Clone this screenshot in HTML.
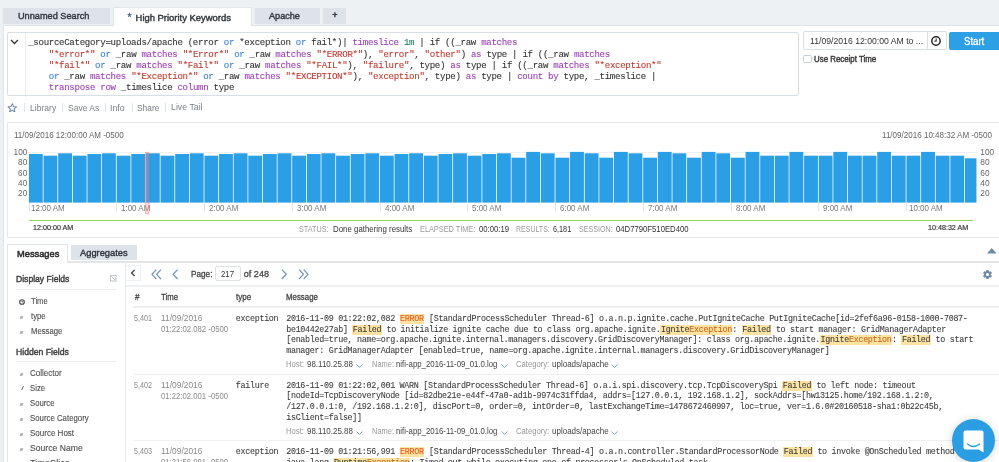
<!DOCTYPE html>
<html><head><meta charset="utf-8">
<style>
*{box-sizing:border-box;margin:0;padding:0}
html,body{width:999px;height:462px;overflow:hidden;background:#eef1f3;font-family:"Liberation Sans",sans-serif;color:#444;position:relative}
.a{position:absolute;white-space:pre}
.s{color:#c0392f}.o{color:#3b7fd9}.k{color:#9a3fb5}.n{color:#23805c}
.bar{position:absolute;background:#2b9be0}
.hl{background:#fce3a2;padding:0 0.5px}
.er{color:#ec5a1e}
.ex{color:#c8661c}
</style></head><body><div id="root" style="position:absolute;left:0;top:0;width:999px;height:462px;overflow:hidden;will-change:transform;background:#eef1f3">
<div class="a" style="left:3px;top:8px;width:107px;height:15.5px;background:#dde3e9;"></div>
<div class="a" style="left:17.60px;top:9.91px;font:normal 9.72px/12.64px 'Liberation Sans',sans-serif;color:#34383c;-webkit-text-stroke:0.42px #34383c;transform:scaleX(0.9439);transform-origin:0 0;">Unnamed Search</div>
<div class="a" style="left:3px;top:25px;width:1000px;height:440px;background:#fff;border:1px solid #e0e5e9"></div>
<div class="a" style="left:112.5px;top:7px;width:139.5px;height:19px;background:#fff;border:1px solid #e0e5e9;border-bottom:none"></div>
<div class="a" style="left:127.60px;top:11.14px;font:normal 10.5px/13.65px 'Liberation Sans',sans-serif;color:#3d6685;-webkit-text-stroke:0.3px #3d6685;">*</div>
<div class="a" style="left:135.60px;top:11.50px;font:normal 9.43px/12.26px 'Liberation Sans',sans-serif;color:#33373b;-webkit-text-stroke:0.42px #33373b;">High Priority Keywords</div>
<div class="a" style="left:255px;top:8px;width:65px;height:16px;background:#dde3e9;"></div>
<div class="a" style="left:268.75px;top:10.14px;font:normal 9.69px/12.6px 'Liberation Sans',sans-serif;color:#34383c;-webkit-text-stroke:0.42px #34383c;transform:scaleX(0.9432);transform-origin:0 0;">Apache</div>
<div class="a" style="left:322.6px;top:8px;width:23.4px;height:16px;background:#dde3e9;"></div>
<div class="a" style="left:332.20px;top:10.33px;font:normal 9px/11.7px 'Liberation Sans',sans-serif;color:#34383c;-webkit-text-stroke:0.5px #34383c;">+</div>
<div class="a" style="left:6.5px;top:31.5px;width:792.5px;height:64.5px;background:#fff;border:1px solid #d8dfe4;border-radius:2px"></div>
<div class="a" style="left:24.5px;top:32.5px;width:1px;height:62.5px;background:#e9edf0;"></div>
<svg class="a" style="left:10px;top:39px" width="9" height="6" viewBox="0 0 9 6"><path d="M1 1 L4.5 4.5 L8 1" fill="none" stroke="#333" stroke-width="1.3"/></svg>
<div class="a" style="left:28.2px;top:37.45px;font:9.1px/11.25px 'Liberation Mono',monospace;letter-spacing:-0.311px;color:#333;-webkit-text-stroke-width:0.1px">_sourceCategory=uploads/apache (error <span class="o">or</span> *exception <span class="o">or</span> fail*)| <span class="k">timeslice</span> <span class="n">1m</span> | if ((_raw <span class="k">matches</span>
    <span class="s">"*error*"</span> <span class="o">or</span> _raw <span class="k">matches</span> <span class="s">"*Error*"</span> <span class="o">or</span> _raw <span class="k">matches</span> <span class="s">"*ERROR*"</span>), <span class="s">"error"</span>, <span class="s">"other"</span>) <span class="k">as</span> type | if ((_raw <span class="k">matches</span>
    <span class="s">"*fail*"</span> <span class="o">or</span> _raw <span class="k">matches</span> <span class="s">"*Fail*"</span> <span class="o">or</span> _raw <span class="k">matches</span> <span class="s">"*FAIL*"</span>), <span class="s">"failure"</span>, type) <span class="k">as</span> type | if ((_raw <span class="k">matches</span> <span class="s">"*exception*"</span>
    <span class="o">or</span> _raw <span class="k">matches</span> <span class="s">"*Exception*"</span> <span class="o">or</span> _raw <span class="k">matches</span> <span class="s">"*EXCEPTION*"</span>), <span class="s">"exception"</span>, type) <span class="k">as</span> type | <span class="k">count by</span> type, _timeslice |
    <span class="k">transpose row</span> _timeslice <span class="k">column</span> type</div>
<div class="a" style="left:803.3px;top:31.4px;width:143.5px;height:18.8px;background:#fff;border:1px solid #d8dfe4;border-radius:2px"></div>
<div class="a" style="left:926.5px;top:32.4px;width:1px;height:16.8px;background:#d8dfe4;"></div>
<div class="a" style="left:809.80px;top:35.73px;font:normal 9.2px/11.96px 'Liberation Sans',sans-serif;color:#333;transform:scaleX(0.9431);transform-origin:0 0;">11/09/2016 12:00:00 AM to ...</div>
<svg class="a" style="left:929.7px;top:34.7px" width="12" height="12" viewBox="0 0 12 12"><circle cx="6" cy="6" r="4.2" fill="none" stroke="#2a2a2a" stroke-width="1.5"/><path d="M6.2 3.4 L6.2 6.1 L4.4 6.1" fill="none" stroke="#3a3a3a" stroke-width="1.1"/></svg>
<div class="a" style="left:949.3px;top:31.8px;width:60px;height:18.4px;background:#2c9fe5;border-radius:2px"></div>
<div class="a" style="left:964.00px;top:34.94px;font:normal 10.19px/13.25px 'Liberation Sans',sans-serif;color:#fff;-webkit-text-stroke:0.3px #fff;transform:scaleX(0.9433);transform-origin:0 0;">Start</div>
<div class="a" style="left:803.3px;top:54.5px;width:8.5px;height:8.5px;background:#fff;border:1px solid #c9d0d6;border-radius:1.5px"></div>
<div class="a" style="left:813.70px;top:53.96px;font:normal 8.37px/10.88px 'Liberation Sans',sans-serif;color:#383838;-webkit-text-stroke:0.4px #383838;transform:scaleX(0.9432);transform-origin:0 0;">Use Receipt Time</div>
<svg class="a" style="left:7.2px;top:102.6px" width="10.5" height="9.6" viewBox="0 0 24 22"><path d="M12 1.5 L14.9 8 L21.8 8.7 L16.6 13.4 L18.1 20.3 L12 16.7 L5.9 20.3 L7.4 13.4 L2.2 8.7 L9.1 8 Z" fill="none" stroke="#6f8cab" stroke-width="2.4" stroke-linejoin="round"/></svg>
<div class="a" style="left:24px;top:103px;width:1px;height:9px;background:#dfe4e8;"></div>
<div class="a" style="left:62.4px;top:103px;width:1px;height:9px;background:#dfe4e8;"></div>
<div class="a" style="left:105px;top:103px;width:1px;height:9px;background:#dfe4e8;"></div>
<div class="a" style="left:131.7px;top:103px;width:1px;height:9px;background:#dfe4e8;"></div>
<div class="a" style="left:165.4px;top:103px;width:1px;height:9px;background:#dfe4e8;"></div>
<div class="a" style="left:29.80px;top:102.72px;font:normal 8.91px/11.58px 'Liberation Sans',sans-serif;color:#7b8086;transform:scaleX(0.9620);transform-origin:0 0;">Library</div>
<div class="a" style="left:67.60px;top:102.79px;font:normal 8.84px/11.49px 'Liberation Sans',sans-serif;color:#7b8086;transform:scaleX(0.9619);transform-origin:0 0;">Save As</div>
<div class="a" style="left:110.40px;top:102.53px;font:normal 9.1px/11.83px 'Liberation Sans',sans-serif;color:#7b8086;transform:scaleX(0.9619);transform-origin:0 0;">Info</div>
<div class="a" style="left:137.00px;top:102.90px;font:normal 8.73px/11.35px 'Liberation Sans',sans-serif;color:#7b8086;transform:scaleX(0.9615);transform-origin:0 0;">Share</div>
<div class="a" style="left:170.60px;top:102.49px;font:normal 9.14px/11.88px 'Liberation Sans',sans-serif;color:#7b8086;transform:scaleX(0.9617);transform-origin:0 0;">Live Tail</div>
<div class="a" style="left:6.5px;top:121.8px;width:1000px;height:116.6px;background:#fff;border:1px solid #e5e9ec"></div>
<div class="a" style="left:14.30px;top:129.78px;font:normal 8.45px/10.98px 'Liberation Sans',sans-serif;color:#666;transform:scaleX(0.9521);transform-origin:0 0;">11/09/2016 12:00:00 AM -0500</div>
<div class="a" style="left:882.00px;top:129.77px;font:normal 8.46px/11.0px 'Liberation Sans',sans-serif;color:#666;transform:scaleX(0.9519);transform-origin:0 0;">11/09/2016 10:48:32 AM -0500</div>
<div class="a" style="left:28px;top:151.5px;width:950px;height:1px;background:#eef0f2;"></div>
<svg class="a" style="left:0;top:0" width="999" height="240" viewBox="0 0 999 240"><rect x="28.90" y="154.00" width="13.85" height="48.60" fill="#2a9fe6"/><rect x="43.53" y="155.70" width="13.85" height="46.90" fill="#2a9fe6"/><rect x="58.15" y="153.30" width="13.85" height="49.30" fill="#2a9fe6"/><rect x="72.78" y="155.70" width="13.85" height="46.90" fill="#2a9fe6"/><rect x="87.40" y="154.00" width="13.85" height="48.60" fill="#2a9fe6"/><rect x="102.03" y="153.30" width="13.85" height="49.30" fill="#2a9fe6"/><rect x="116.66" y="155.70" width="13.85" height="46.90" fill="#2a9fe6"/><rect x="131.28" y="154.00" width="13.85" height="48.60" fill="#2a9fe6"/><rect x="145.91" y="153.30" width="13.85" height="49.30" fill="#2a9fe6"/><rect x="160.53" y="155.70" width="13.85" height="46.90" fill="#2a9fe6"/><rect x="175.16" y="154.00" width="13.85" height="48.60" fill="#2a9fe6"/><rect x="189.79" y="153.30" width="13.85" height="49.30" fill="#2a9fe6"/><rect x="204.41" y="155.70" width="13.85" height="46.90" fill="#2a9fe6"/><rect x="219.04" y="154.00" width="13.85" height="48.60" fill="#2a9fe6"/><rect x="233.66" y="153.30" width="13.85" height="49.30" fill="#2a9fe6"/><rect x="248.29" y="155.70" width="13.85" height="46.90" fill="#2a9fe6"/><rect x="262.92" y="154.00" width="13.85" height="48.60" fill="#2a9fe6"/><rect x="277.54" y="153.30" width="13.85" height="49.30" fill="#2a9fe6"/><rect x="292.17" y="155.70" width="13.85" height="46.90" fill="#2a9fe6"/><rect x="306.79" y="154.00" width="13.85" height="48.60" fill="#2a9fe6"/><rect x="321.42" y="153.30" width="13.85" height="49.30" fill="#2a9fe6"/><rect x="336.05" y="155.70" width="13.85" height="46.90" fill="#2a9fe6"/><rect x="350.67" y="154.00" width="13.85" height="48.60" fill="#2a9fe6"/><rect x="365.30" y="153.30" width="13.85" height="49.30" fill="#2a9fe6"/><rect x="379.92" y="155.70" width="13.85" height="46.90" fill="#2a9fe6"/><rect x="394.55" y="154.00" width="13.85" height="48.60" fill="#2a9fe6"/><rect x="409.18" y="153.30" width="13.85" height="49.30" fill="#2a9fe6"/><rect x="423.80" y="155.70" width="13.85" height="46.90" fill="#2a9fe6"/><rect x="438.43" y="154.00" width="13.85" height="48.60" fill="#2a9fe6"/><rect x="453.05" y="153.30" width="13.85" height="49.30" fill="#2a9fe6"/><rect x="467.68" y="155.70" width="13.85" height="46.90" fill="#2a9fe6"/><rect x="482.31" y="154.00" width="13.85" height="48.60" fill="#2a9fe6"/><rect x="496.93" y="153.30" width="13.85" height="49.30" fill="#2a9fe6"/><rect x="511.56" y="157.70" width="13.85" height="44.90" fill="#2a9fe6"/><rect x="526.18" y="151.90" width="13.85" height="50.70" fill="#2a9fe6"/><rect x="540.81" y="153.30" width="13.85" height="49.30" fill="#2a9fe6"/><rect x="555.44" y="157.70" width="13.85" height="44.90" fill="#2a9fe6"/><rect x="570.06" y="151.90" width="13.85" height="50.70" fill="#2a9fe6"/><rect x="584.69" y="153.30" width="13.85" height="49.30" fill="#2a9fe6"/><rect x="599.31" y="157.70" width="13.85" height="44.90" fill="#2a9fe6"/><rect x="613.94" y="151.90" width="13.85" height="50.70" fill="#2a9fe6"/><rect x="628.57" y="153.30" width="13.85" height="49.30" fill="#2a9fe6"/><rect x="643.19" y="157.70" width="13.85" height="44.90" fill="#2a9fe6"/><rect x="657.82" y="151.90" width="13.85" height="50.70" fill="#2a9fe6"/><rect x="672.44" y="153.30" width="13.85" height="49.30" fill="#2a9fe6"/><rect x="687.07" y="157.70" width="13.85" height="44.90" fill="#2a9fe6"/><rect x="701.70" y="151.90" width="13.85" height="50.70" fill="#2a9fe6"/><rect x="716.32" y="153.30" width="13.85" height="49.30" fill="#2a9fe6"/><rect x="730.95" y="157.70" width="13.85" height="44.90" fill="#2a9fe6"/><rect x="745.57" y="151.90" width="13.85" height="50.70" fill="#2a9fe6"/><rect x="760.20" y="155.70" width="13.85" height="46.90" fill="#2a9fe6"/><rect x="774.83" y="155.70" width="13.85" height="46.90" fill="#2a9fe6"/><rect x="789.45" y="151.90" width="13.85" height="50.70" fill="#2a9fe6"/><rect x="804.08" y="155.70" width="13.85" height="46.90" fill="#2a9fe6"/><rect x="818.70" y="155.70" width="13.85" height="46.90" fill="#2a9fe6"/><rect x="833.33" y="151.90" width="13.85" height="50.70" fill="#2a9fe6"/><rect x="847.96" y="155.70" width="13.85" height="46.90" fill="#2a9fe6"/><rect x="862.58" y="155.70" width="13.85" height="46.90" fill="#2a9fe6"/><rect x="877.21" y="151.90" width="13.85" height="50.70" fill="#2a9fe6"/><rect x="891.83" y="155.70" width="13.85" height="46.90" fill="#2a9fe6"/><rect x="906.46" y="155.70" width="13.85" height="46.90" fill="#2a9fe6"/><rect x="921.09" y="151.90" width="13.85" height="50.70" fill="#2a9fe6"/><rect x="935.71" y="155.70" width="13.85" height="46.90" fill="#2a9fe6"/><rect x="950.34" y="155.70" width="13.85" height="46.90" fill="#2a9fe6"/><rect x="964.96" y="158.30" width="11.50" height="44.30" fill="#2a9fe6"/></svg>
<div class="a" style="left:13.60px;top:147.03px;font:normal 8.3px/10.79px 'Liberation Sans',sans-serif;color:#666;">100</div>
<div class="a" style="left:980.30px;top:147.03px;font:normal 8.3px/10.79px 'Liberation Sans',sans-serif;color:#666;">100</div>
<div class="a" style="left:18.10px;top:157.33px;font:normal 8.3px/10.79px 'Liberation Sans',sans-serif;color:#666;">80</div>
<div class="a" style="left:980.30px;top:157.33px;font:normal 8.3px/10.79px 'Liberation Sans',sans-serif;color:#666;">80</div>
<div class="a" style="left:18.10px;top:167.63px;font:normal 8.3px/10.79px 'Liberation Sans',sans-serif;color:#666;">60</div>
<div class="a" style="left:980.30px;top:167.63px;font:normal 8.3px/10.79px 'Liberation Sans',sans-serif;color:#666;">60</div>
<div class="a" style="left:18.10px;top:177.93px;font:normal 8.3px/10.79px 'Liberation Sans',sans-serif;color:#666;">40</div>
<div class="a" style="left:980.30px;top:177.93px;font:normal 8.3px/10.79px 'Liberation Sans',sans-serif;color:#666;">40</div>
<div class="a" style="left:18.10px;top:188.23px;font:normal 8.3px/10.79px 'Liberation Sans',sans-serif;color:#666;">20</div>
<div class="a" style="left:980.30px;top:188.23px;font:normal 8.3px/10.79px 'Liberation Sans',sans-serif;color:#666;">20</div>
<div class="a" style="left:28.6px;top:202.5px;width:1px;height:8px;background:#e3e6e9;"></div>
<div class="a" style="left:31.40px;top:203.63px;font:normal 8.2px/10.66px 'Liberation Sans',sans-serif;color:#777;transform:scaleX(0.9756);transform-origin:0 0;">12:00 AM</div>
<div class="a" style="left:116.4px;top:202.5px;width:1px;height:8px;background:#e3e6e9;"></div>
<div class="a" style="left:121.38px;top:203.63px;font:normal 8.2px/10.66px 'Liberation Sans',sans-serif;color:#777;transform:scaleX(0.9756);transform-origin:0 0;">1:00 AM</div>
<div class="a" style="left:204.1px;top:202.5px;width:1px;height:8px;background:#e3e6e9;"></div>
<div class="a" style="left:209.14px;top:203.63px;font:normal 8.2px/10.66px 'Liberation Sans',sans-serif;color:#777;transform:scaleX(0.9756);transform-origin:0 0;">2:00 AM</div>
<div class="a" style="left:291.9px;top:202.5px;width:1px;height:8px;background:#e3e6e9;"></div>
<div class="a" style="left:296.90px;top:203.63px;font:normal 8.2px/10.66px 'Liberation Sans',sans-serif;color:#777;transform:scaleX(0.9756);transform-origin:0 0;">3:00 AM</div>
<div class="a" style="left:379.6px;top:202.5px;width:1px;height:8px;background:#e3e6e9;"></div>
<div class="a" style="left:384.66px;top:203.63px;font:normal 8.2px/10.66px 'Liberation Sans',sans-serif;color:#777;transform:scaleX(0.9756);transform-origin:0 0;">4:00 AM</div>
<div class="a" style="left:467.4px;top:202.5px;width:1px;height:8px;background:#e3e6e9;"></div>
<div class="a" style="left:472.42px;top:203.63px;font:normal 8.2px/10.66px 'Liberation Sans',sans-serif;color:#777;transform:scaleX(0.9756);transform-origin:0 0;">5:00 AM</div>
<div class="a" style="left:555.2px;top:202.5px;width:1px;height:8px;background:#e3e6e9;"></div>
<div class="a" style="left:560.18px;top:203.63px;font:normal 8.2px/10.66px 'Liberation Sans',sans-serif;color:#777;transform:scaleX(0.9756);transform-origin:0 0;">6:00 AM</div>
<div class="a" style="left:642.9px;top:202.5px;width:1px;height:8px;background:#e3e6e9;"></div>
<div class="a" style="left:647.94px;top:203.63px;font:normal 8.2px/10.66px 'Liberation Sans',sans-serif;color:#777;transform:scaleX(0.9756);transform-origin:0 0;">7:00 AM</div>
<div class="a" style="left:730.7px;top:202.5px;width:1px;height:8px;background:#e3e6e9;"></div>
<div class="a" style="left:735.70px;top:203.63px;font:normal 8.2px/10.66px 'Liberation Sans',sans-serif;color:#777;transform:scaleX(0.9756);transform-origin:0 0;">8:00 AM</div>
<div class="a" style="left:818.4px;top:202.5px;width:1px;height:8px;background:#e3e6e9;"></div>
<div class="a" style="left:823.46px;top:203.63px;font:normal 8.2px/10.66px 'Liberation Sans',sans-serif;color:#777;transform:scaleX(0.9756);transform-origin:0 0;">9:00 AM</div>
<div class="a" style="left:906.2px;top:202.5px;width:1px;height:8px;background:#e3e6e9;"></div>
<div class="a" style="left:909.00px;top:203.63px;font:normal 8.2px/10.66px 'Liberation Sans',sans-serif;color:#777;transform:scaleX(0.9756);transform-origin:0 0;">10:00 AM</div>
<div class="a" style="left:28.6px;top:219.6px;width:944px;height:1.6px;background:#8fd05a;"></div>
<svg class="a" style="left:0;top:0" width="240" height="240" viewBox="0 0 240 240"><rect x="145.5" y="152.3" width="3.4" height="61.5" fill="rgba(255,140,140,0.32)" stroke="rgba(240,110,110,0.5)" stroke-width="0.8"/></svg>
<div class="a" style="left:32.50px;top:222.89px;font:normal 7.54px/9.8px 'Liberation Sans',sans-serif;color:#333;-webkit-text-stroke:0.18px #333;transform:scaleX(0.9518);transform-origin:0 0;">12:00:00 AM</div>
<div class="a" style="left:927.80px;top:222.90px;font:normal 7.52px/9.78px 'Liberation Sans',sans-serif;color:#333;-webkit-text-stroke:0.18px #333;transform:scaleX(0.9520);transform-origin:0 0;">10:48:32 AM</div>
<div class="a" style="left:298.90px;top:223.73px;font:normal 8.6px/11.18px 'Liberation Sans',sans-serif;color:#9a9a9a;transform:scaleX(0.8419);transform-origin:0 0;">STATUS:</div>
<div class="a" style="left:333.20px;top:223.73px;font:normal 8.6px/11.18px 'Liberation Sans',sans-serif;color:#333;transform:scaleX(0.9164);transform-origin:0 0;">Done gathering results</div>
<div class="a" style="left:419.70px;top:223.73px;font:normal 8.6px/11.18px 'Liberation Sans',sans-serif;color:#9a9a9a;transform:scaleX(0.8528);transform-origin:0 0;">ELAPSED TIME:</div>
<div class="a" style="left:479.00px;top:223.73px;font:normal 8.6px/11.18px 'Liberation Sans',sans-serif;color:#333;transform:scaleX(0.8961);transform-origin:0 0;">00:00:19</div>
<div class="a" style="left:515.60px;top:223.73px;font:normal 8.6px/11.18px 'Liberation Sans',sans-serif;color:#9a9a9a;transform:scaleX(0.8161);transform-origin:0 0;">RESULTS:</div>
<div class="a" style="left:553.30px;top:223.73px;font:normal 8.6px/11.18px 'Liberation Sans',sans-serif;color:#333;transform:scaleX(0.8457);transform-origin:0 0;">6,181</div>
<div class="a" style="left:578.70px;top:223.73px;font:normal 8.6px/11.18px 'Liberation Sans',sans-serif;color:#9a9a9a;transform:scaleX(0.8320);transform-origin:0 0;">SESSION:</div>
<div class="a" style="left:616.40px;top:223.73px;font:normal 8.6px/11.18px 'Liberation Sans',sans-serif;color:#333;transform:scaleX(0.8984);transform-origin:0 0;">04D7790F510ED400</div>
<div class="a" style="left:7px;top:260.5px;width:1000px;height:210px;background:#fff;border:1px solid #e0e5e9;border-top:2px solid #e4e5e7"></div>
<div class="a" style="left:7px;top:243.6px;width:61px;height:19.4px;background:#fff;border:1px solid #e0e5e9;border-bottom:none"></div>
<div class="a" style="left:16.50px;top:248.26px;font:normal 9.67px/12.57px 'Liberation Sans',sans-serif;color:#2a2a2a;-webkit-text-stroke:0.5px #2a2a2a;transform:scaleX(0.9620);transform-origin:0 0;">Messages</div>
<div class="a" style="left:70.6px;top:244.6px;width:66px;height:15px;background:#dde3e9;"></div>
<div class="a" style="left:79.70px;top:246.96px;font:normal 9.77px/12.7px 'Liberation Sans',sans-serif;color:#33373b;-webkit-text-stroke:0.42px #33373b;transform:scaleX(0.9525);transform-origin:0 0;">Aggregates</div>
<svg class="a" style="left:986.5px;top:248.2px" width="9.5" height="5.5" viewBox="0 0 9 5"><path d="M0 5 L4.5 0 L9 5Z" fill="#6f8aa5"/></svg>
<div class="a" style="left:125.4px;top:261px;width:1px;height:210px;background:#e6eaed;"></div>
<div class="a" style="left:15.90px;top:273.90px;font:normal 9.03px/11.74px 'Liberation Sans',sans-serif;color:#3d3d3d;-webkit-text-stroke:0.42px #3d3d3d;transform:scaleX(0.9519);transform-origin:0 0;">Display Fields</div>
<svg class="a" style="left:110px;top:275px" width="6.5" height="6.5" viewBox="0 0 7 7"><rect x="0.5" y="0.5" width="6" height="6" fill="none" stroke="#b9c0c6"/><path d="M1.5 1.5 L5.5 5.5" stroke="#b9c0c6"/></svg>
<div class="a" style="left:15.9px;top:288.7px;width:100.5px;height:1px;background:#eceff1;"></div>
<svg class="a" style="left:19.2px;top:299px" width="6" height="6" viewBox="0 0 6 6"><circle cx="3" cy="3" r="2.3" fill="none" stroke="#444" stroke-width="1.1"/><path d="M3 1.8V3H4" stroke="#444" stroke-width=".8" fill="none"/></svg>
<div class="a" style="left:30.60px;top:295.63px;font:normal 8.4px/10.92px 'Liberation Sans',sans-serif;color:#4d4d4d;-webkit-text-stroke:0.1px #4d4d4d;transform:scaleX(0.9153);transform-origin:0 0;">Time</div>
<div class="a" style="left:20.4px;top:315.79999999999995px;width:3px;height:3px;background:#b3b3b3;transform:skewX(-15deg);border-radius:1px"></div>
<div class="a" style="left:30.60px;top:311.03px;font:normal 8.4px/10.92px 'Liberation Sans',sans-serif;color:#4d4d4d;-webkit-text-stroke:0.1px #4d4d4d;transform:scaleX(0.9196);transform-origin:0 0;">type</div>
<div class="a" style="left:20.4px;top:330.59999999999997px;width:3px;height:3px;background:#b3b3b3;transform:skewX(-15deg);border-radius:1px"></div>
<div class="a" style="left:30.60px;top:325.83px;font:normal 8.4px/10.92px 'Liberation Sans',sans-serif;color:#4d4d4d;-webkit-text-stroke:0.1px #4d4d4d;transform:scaleX(0.9242);transform-origin:0 0;">Message</div>
<div class="a" style="left:16.10px;top:346.55px;font:normal 9.08px/11.8px 'Liberation Sans',sans-serif;color:#3d3d3d;-webkit-text-stroke:0.42px #3d3d3d;transform:scaleX(0.9528);transform-origin:0 0;">Hidden Fields</div>
<div class="a" style="left:15.9px;top:361.1px;width:100.5px;height:1px;background:#eceff1;"></div>
<div class="a" style="left:20.4px;top:372.59999999999997px;width:3px;height:3px;background:#b3b3b3;transform:skewX(-15deg);border-radius:1px"></div>
<div class="a" style="left:30.30px;top:367.83px;font:normal 8.4px/10.92px 'Liberation Sans',sans-serif;color:#4d4d4d;-webkit-text-stroke:0.1px #4d4d4d;transform:scaleX(0.9564);transform-origin:0 0;">Collector</div>
<div class="a" style="left:21.6px;top:386.28px;width:1.3px;height:4.2px;background:#666;transform:skewX(-22deg)"></div>
<div class="a" style="left:30.30px;top:382.91px;font:normal 8.4px/10.92px 'Liberation Sans',sans-serif;color:#4d4d4d;-webkit-text-stroke:0.1px #4d4d4d;transform:scaleX(0.9240);transform-origin:0 0;">Size</div>
<div class="a" style="left:20.4px;top:402.76px;width:3px;height:3px;background:#b3b3b3;transform:skewX(-15deg);border-radius:1px"></div>
<div class="a" style="left:30.30px;top:397.99px;font:normal 8.4px/10.92px 'Liberation Sans',sans-serif;color:#4d4d4d;-webkit-text-stroke:0.1px #4d4d4d;transform:scaleX(0.9242);transform-origin:0 0;">Source</div>
<div class="a" style="left:20.4px;top:417.84px;width:3px;height:3px;background:#b3b3b3;transform:skewX(-15deg);border-radius:1px"></div>
<div class="a" style="left:30.30px;top:413.07px;font:normal 8.4px/10.92px 'Liberation Sans',sans-serif;color:#4d4d4d;-webkit-text-stroke:0.1px #4d4d4d;transform:scaleX(0.9344);transform-origin:0 0;">Source Category</div>
<div class="a" style="left:20.4px;top:432.91999999999996px;width:3px;height:3px;background:#b3b3b3;transform:skewX(-15deg);border-radius:1px"></div>
<div class="a" style="left:30.30px;top:428.15px;font:normal 8.4px/10.92px 'Liberation Sans',sans-serif;color:#4d4d4d;-webkit-text-stroke:0.1px #4d4d4d;transform:scaleX(0.9563);transform-origin:0 0;">Source Host</div>
<div class="a" style="left:20.4px;top:448.0px;width:3px;height:3px;background:#b3b3b3;transform:skewX(-15deg);border-radius:1px"></div>
<div class="a" style="left:30.30px;top:443.23px;font:normal 8.4px/10.92px 'Liberation Sans',sans-serif;color:#4d4d4d;-webkit-text-stroke:0.1px #4d4d4d;transform:scaleX(1.0300);transform-origin:0 0;">Source Name</div>
<div class="a" style="left:20.4px;top:463.08px;width:3px;height:3px;background:#b3b3b3;transform:skewX(-15deg);border-radius:1px"></div>
<div class="a" style="left:30.30px;top:458.31px;font:normal 8.4px/10.92px 'Liberation Sans',sans-serif;color:#4d4d4d;-webkit-text-stroke:0.1px #4d4d4d;transform:scaleX(1.0940);transform-origin:0 0;">TimeSlice</div>
<div class="a" style="left:125.4px;top:264.8px;width:15.5px;height:16px;background:#fff;border:1px solid #eef1f4;border-left:none"></div>
<div class="a" style="left:125.4px;top:261px;width:1px;height:210px;background:#e9ecef;"></div>
<svg class="a" style="left:130px;top:269px" width="6" height="8" viewBox="0 0 6 8"><path d="M4.6 0.9 L1.6 4 L4.6 7.1" fill="none" stroke="#4f5256" stroke-width="1.5"/></svg>
<svg class="a" style="left:150.5px;top:268.8px" width="11" height="11" viewBox="0 0 11 11"><path d="M5.3 0.6 L1 5.3 L5.3 10 M9.9 0.6 L5.6 5.3 L9.9 10" fill="none" stroke="#7595b6" stroke-width="1.25"/></svg>
<svg class="a" style="left:172px;top:268.8px" width="6.5" height="11" viewBox="0 0 6.5 11"><path d="M5.6 0.6 L1.2 5.3 L5.6 10" fill="none" stroke="#7595b6" stroke-width="1.25"/></svg>
<div class="a" style="left:190.50px;top:269.39px;font:normal 8.64px/11.23px 'Liberation Sans',sans-serif;color:#444;-webkit-text-stroke:0.28px #444;transform:scaleX(0.9522);transform-origin:0 0;">Page:</div>
<div class="a" style="left:214.6px;top:265.6px;width:26.6px;height:15.7px;background:#fff;border:1px solid #dde3e8;border-radius:2px"></div>
<div class="a" style="left:221.30px;top:268.83px;font:normal 9.2px/11.96px 'Liberation Sans',sans-serif;color:#333;transform:scaleX(0.8534);transform-origin:0 0;">217</div>
<div class="a" style="left:243.80px;top:268.97px;font:normal 9.06px/11.78px 'Liberation Sans',sans-serif;color:#444;-webkit-text-stroke:0.28px #444;">of 248</div>
<svg class="a" style="left:281.2px;top:268.8px" width="6.5" height="11" viewBox="0 0 6.5 11"><path d="M0.9 0.6 L5.3 5.3 L0.9 10" fill="none" stroke="#7595b6" stroke-width="1.25"/></svg>
<svg class="a" style="left:298.2px;top:268.8px" width="11" height="11" viewBox="0 0 11 11"><path d="M1.1 0.6 L5.4 5.3 L1.1 10 M5.7 0.6 L10 5.3 L5.7 10" fill="none" stroke="#7595b6" stroke-width="1.25"/></svg>
<svg class="a" style="left:982px;top:268.5px" width="11" height="11" viewBox="0 0 24 24"><path fill="#6f8aa5" d="M19.4 13c.04-.3.06-.65.06-1s-.02-.7-.07-1l2.1-1.65c.2-.15.25-.42.13-.64l-2-3.46c-.12-.22-.4-.3-.6-.22l-2.5 1c-.52-.4-1.08-.73-1.7-.98l-.37-2.65A.5.5 0 0 0 14 2h-4c-.25 0-.46.18-.5.42l-.37 2.650c-.62.25-1.18.6-1.7.98l-2.5-1c-.22-.08-.48 0-.6.22l-2 3.46c-.13.22-.07.5.12.64L4.57 11c-.04.3-.07.66-.07 1s.02.7.07 1l-2.100 1.65c-.2.15-.25.42-.13.64l2 3.46c.12.22.4.3.6.22l2.5-1c.52.4 1.08.73 1.7.98l.37 2.65c.04.24.25.42.5.42h4c.25 0 .46-.18.5-.42l.37-2.65c.62-.25 1.18-.6 1.7-.98l2.5 1c.22.08.48 0 .6-.22l2-3.46c.12-.22.07-.5-.12-.64L19.4 13zM12 15.5A3.5 3.5 0 1 1 12 8.5a3.5 3.5 0 0 1 0 7z"/></svg>
<div class="a" style="left:126px;top:285px;width:880px;height:1.6px;background:#eef0f1;"></div>
<div class="a" style="left:134.60px;top:291.73px;font:normal 8.3px/10.79px 'Liberation Sans',sans-serif;color:#444;-webkit-text-stroke:0.28px #444;transform:scaleX(0.9748);transform-origin:0 0;">#</div>
<div class="a" style="left:161.10px;top:291.73px;font:normal 8.3px/10.79px 'Liberation Sans',sans-serif;color:#444;-webkit-text-stroke:0.28px #444;transform:scaleX(0.9373);transform-origin:0 0;">Time</div>
<div class="a" style="left:236.00px;top:291.73px;font:normal 8.3px/10.79px 'Liberation Sans',sans-serif;color:#444;-webkit-text-stroke:0.28px #444;transform:scaleX(0.9689);transform-origin:0 0;">type</div>
<div class="a" style="left:286.10px;top:291.73px;font:normal 8.3px/10.79px 'Liberation Sans',sans-serif;color:#444;-webkit-text-stroke:0.28px #444;transform:scaleX(0.9472);transform-origin:0 0;">Message</div>
<div class="a" style="left:133px;top:306.3px;width:870px;height:1.3px;background:#eef0f2;"></div>
<div class="a" style="left:134.40px;top:314.13px;font:normal 8.2px/10.66px 'Liberation Sans',sans-serif;color:#8a8a8a;transform:scaleX(0.8772);transform-origin:0 0;">5,401</div>
<div class="a" style="left:161.00px;top:314.13px;font:normal 8.2px/10.66px 'Liberation Sans',sans-serif;color:#8a8a8a;transform:scaleX(1.0264);transform-origin:0 0;">11/09/2016</div>
<div class="a" style="left:161.00px;top:324.93px;font:normal 8.2px/10.66px 'Liberation Sans',sans-serif;color:#8a8a8a;transform:scaleX(0.9447);transform-origin:0 0;">01:22:02.082 -0500</div>
<div class="a" style="left:235.80px;top:313.80px;font:normal 8.4px/10.92px 'Liberation Mono',monospace;color:#3c3c3c;-webkit-text-stroke:0.08px #3c3c3c;letter-spacing:-0.301px">exception</div>
<div class="a" style="left:286.2px;top:313.91px;font:8.4px/10.7px 'Liberation Mono',monospace;letter-spacing:-0.301px;color:#3c3c3c;-webkit-text-stroke-width:0.08px">2016-11-09 01:22:02,082 <span class="hl er">ERROR</span> [StandardProcessScheduler Thread-6] o.a.n.p.ignite.cache.PutIgniteCache PutIgniteCache[id=2fef6a96-0158-1000-7087-
be10442e27ab] <span class="hl">Failed</span> to initialize ignite cache due to class org.apache.ignite.<span class="hl">Ignite<span class="ex">Exception</span></span>: <span class="hl">Failed</span> to start manager: GridManagerAdapter
[enabled=true, name=org.apache.ignite.internal.managers.discovery.GridDiscoveryManager]: class org.apache.ignite.<span class="hl">Ignite<span class="ex">Exception</span></span>: <span class="hl">Failed</span> to start
manager: GridManagerAdapter [enabled=true, name=org.apache.ignite.internal.managers.discovery.GridDiscoveryManager]</div>
<div class="a" style="left:286.30px;top:360.13px;font:normal 8.2px/10.66px 'Liberation Sans',sans-serif;color:#999;transform:scaleX(0.9405);transform-origin:0 0;">Host:</div>
<div class="a" style="left:307.00px;top:360.13px;font:normal 8.2px/10.66px 'Liberation Sans',sans-serif;color:#444;transform:scaleX(0.9731);transform-origin:0 0;">98.110.25.88</div>
<svg class="a" style="left:355.7px;top:363.8px" width="7" height="4" viewBox="0 0 7 4"><path d="M0.5 0.5 L3.5 3.3 L6.5 0.5" fill="none" stroke="#6f95c0" stroke-width="0.9"/></svg>
<div class="a" style="left:371.90px;top:360.13px;font:normal 8.2px/10.66px 'Liberation Sans',sans-serif;color:#999;transform:scaleX(0.9150);transform-origin:0 0;">Name:</div>
<div class="a" style="left:396.20px;top:360.13px;font:normal 8.2px/10.66px 'Liberation Sans',sans-serif;color:#444;transform:scaleX(0.9537);transform-origin:0 0;">nifi-app_2016-11-09_01.0.log</div>
<svg class="a" style="left:501px;top:363.8px" width="7" height="4" viewBox="0 0 7 4"><path d="M0.5 0.5 L3.5 3.3 L6.5 0.5" fill="none" stroke="#6f95c0" stroke-width="0.9"/></svg>
<div class="a" style="left:516.30px;top:360.13px;font:normal 8.2px/10.66px 'Liberation Sans',sans-serif;color:#999;transform:scaleX(0.9367);transform-origin:0 0;">Category:</div>
<div class="a" style="left:552.20px;top:360.13px;font:normal 8.2px/10.66px 'Liberation Sans',sans-serif;color:#444;transform:scaleX(0.9792);transform-origin:0 0;">uploads/apache</div>
<svg class="a" style="left:611px;top:363.8px" width="7" height="4" viewBox="0 0 7 4"><path d="M0.5 0.5 L3.5 3.3 L6.5 0.5" fill="none" stroke="#6f95c0" stroke-width="0.9"/></svg>
<div class="a" style="left:133px;top:374.2px;width:870px;height:1.3px;background:#eef0f2;"></div>
<div class="a" style="left:134.40px;top:380.83px;font:normal 8.2px/10.66px 'Liberation Sans',sans-serif;color:#8a8a8a;transform:scaleX(0.8772);transform-origin:0 0;">5,402</div>
<div class="a" style="left:161.00px;top:380.83px;font:normal 8.2px/10.66px 'Liberation Sans',sans-serif;color:#8a8a8a;transform:scaleX(1.0264);transform-origin:0 0;">11/09/2016</div>
<div class="a" style="left:161.00px;top:391.63px;font:normal 8.2px/10.66px 'Liberation Sans',sans-serif;color:#8a8a8a;transform:scaleX(0.9447);transform-origin:0 0;">01:22:02.001 -0500</div>
<div class="a" style="left:235.80px;top:380.50px;font:normal 8.4px/10.92px 'Liberation Mono',monospace;color:#3c3c3c;-webkit-text-stroke:0.08px #3c3c3c;letter-spacing:-0.301px">failure</div>
<div class="a" style="left:286.2px;top:380.61px;font:8.4px/10.7px 'Liberation Mono',monospace;letter-spacing:-0.301px;color:#3c3c3c;-webkit-text-stroke-width:0.08px">2016-11-09 01:22:02,001 WARN [StandardProcessScheduler Thread-6] o.a.i.spi.discovery.tcp.TcpDiscoverySpi <span class="hl">Failed</span> to left node: timeout
[nodeId=TcpDiscoveryNode [id=82dbe21e-e44f-47a0-ad1b-9974c31ffda4, addrs=[127.0.0.1, 192.168.1.2], sockAddrs=[hw13125.home/192.168.1.2:0,
/127.0.0.1:0, /192.168.1.2:0], discPort=0, order=0, intOrder=0, lastExchangeTime=1478672460997, loc=true, ver=1.6.0#20160518-sha1:0b22c45b,
isClient=false]]</div>
<div class="a" style="left:286.30px;top:426.83px;font:normal 8.2px/10.66px 'Liberation Sans',sans-serif;color:#999;transform:scaleX(0.9405);transform-origin:0 0;">Host:</div>
<div class="a" style="left:307.00px;top:426.83px;font:normal 8.2px/10.66px 'Liberation Sans',sans-serif;color:#444;transform:scaleX(0.9731);transform-origin:0 0;">98.110.25.88</div>
<svg class="a" style="left:355.7px;top:430.5px" width="7" height="4" viewBox="0 0 7 4"><path d="M0.5 0.5 L3.5 3.3 L6.5 0.5" fill="none" stroke="#6f95c0" stroke-width="0.9"/></svg>
<div class="a" style="left:371.90px;top:426.83px;font:normal 8.2px/10.66px 'Liberation Sans',sans-serif;color:#999;transform:scaleX(0.9150);transform-origin:0 0;">Name:</div>
<div class="a" style="left:396.20px;top:426.83px;font:normal 8.2px/10.66px 'Liberation Sans',sans-serif;color:#444;transform:scaleX(0.9537);transform-origin:0 0;">nifi-app_2016-11-09_01.0.log</div>
<svg class="a" style="left:501px;top:430.5px" width="7" height="4" viewBox="0 0 7 4"><path d="M0.5 0.5 L3.5 3.3 L6.5 0.5" fill="none" stroke="#6f95c0" stroke-width="0.9"/></svg>
<div class="a" style="left:516.30px;top:426.83px;font:normal 8.2px/10.66px 'Liberation Sans',sans-serif;color:#999;transform:scaleX(0.9367);transform-origin:0 0;">Category:</div>
<div class="a" style="left:552.20px;top:426.83px;font:normal 8.2px/10.66px 'Liberation Sans',sans-serif;color:#444;transform:scaleX(0.9792);transform-origin:0 0;">uploads/apache</div>
<svg class="a" style="left:611px;top:430.5px" width="7" height="4" viewBox="0 0 7 4"><path d="M0.5 0.5 L3.5 3.3 L6.5 0.5" fill="none" stroke="#6f95c0" stroke-width="0.9"/></svg>
<div class="a" style="left:133px;top:440.2px;width:870px;height:1.3px;background:#eef0f2;"></div>
<div class="a" style="left:134.40px;top:447.03px;font:normal 8.2px/10.66px 'Liberation Sans',sans-serif;color:#8a8a8a;transform:scaleX(0.8772);transform-origin:0 0;">5,403</div>
<div class="a" style="left:161.00px;top:447.03px;font:normal 8.2px/10.66px 'Liberation Sans',sans-serif;color:#8a8a8a;transform:scaleX(1.0264);transform-origin:0 0;">11/09/2016</div>
<div class="a" style="left:161.00px;top:457.83px;font:normal 8.2px/10.66px 'Liberation Sans',sans-serif;color:#8a8a8a;transform:scaleX(0.9447);transform-origin:0 0;">01:21:56.991 -0500</div>
<div class="a" style="left:235.80px;top:446.70px;font:normal 8.4px/10.92px 'Liberation Mono',monospace;color:#3c3c3c;-webkit-text-stroke:0.08px #3c3c3c;letter-spacing:-0.301px">exception</div>
<div class="a" style="left:286.2px;top:446.81px;font:8.4px/10.7px 'Liberation Mono',monospace;letter-spacing:-0.301px;color:#3c3c3c;-webkit-text-stroke-width:0.08px">2016-11-09 01:21:56,991 <span class="hl er">ERROR</span> [StandardProcessScheduler Thread-4] o.a.n.controller.StandardProcessorNode <span class="hl">Failed</span> to invoke @OnScheduled method
java.lang.<span class="hl">Runtime<span class="ex">Exception</span></span>: Timed out while executing one of processor's OnScheduled task.</div>
<div class="a" style="left:951.5px;top:418.5px;width:43px;height:43px;border-radius:50%;background:#2b9de2;box-shadow:0 1px 8px rgba(0,0,0,.18)"></div>
<svg class="a" style="left:962.5px;top:429.5px" width="21" height="23" viewBox="0 0 21 23"><path d="M2.5 0.5 H18.5 Q20.5 0.5 20.5 2.5 V22.5 L15.5 19.5 H2.5 Q0.5 19.5 0.5 17.5 V2.5 Q0.5 0.5 2.5 0.5Z" fill="#fff"/><path d="M4.5 14 Q10.5 19 16.5 14" fill="none" stroke="#2b9de2" stroke-width="1.4" stroke-linecap="round"/></svg>
</div></body></html>
